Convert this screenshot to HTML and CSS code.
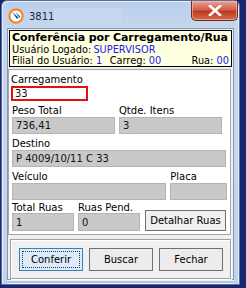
FILE: index.html
```html
<!DOCTYPE html>
<html lang="pt">
<head>
  <meta charset="UTF-8">
  <title>3811</title>
  <link rel="stylesheet" href="styles.css">
</head>
<body>
  <div class="window">
    <div class="titlebar">
      <svg class="app-icon" width="16" height="16" viewBox="0 0 16 16">
        <circle cx="8" cy="8" r="6.6" fill="#fff" stroke="#f08a24" stroke-width="2.2"/>
        <path d="M4 4 L9 11 L10.5 9.5 Z" fill="#1f3f9a"/>
        <path d="M7 3.5 L11.5 10 L12.5 8.5 Z" fill="#2a6ad0"/>
      </svg>
      <span class="title-text">3811</span>
      <span class="title-hidden"></span>
      <div class="close-btn">
        <svg width="14" height="11" viewBox="0 0 14 11">
          <path d="M2 1 L12 10 M12 1 L2 10" stroke="#fff" stroke-width="2.6" stroke-linecap="square"/>
        </svg>
      </div>
    </div>

    <div class="client">
      <div class="header">
        <div class="header-title">Conferência por Carregamento/Rua</div>
        <div class="header-line">
          <span>Usuário Logado:</span><span class="val">SUPERVISOR</span>
        </div>
        <div class="header-line">
          <span class="col-filial">Filial do Usuário: <span class="val">1</span></span>
          <span class="col-carreg">Carreg: <span class="val">00</span></span>
          <span>Rua: <span class="val">00</span></span>
        </div>
      </div>

      <div class="panel">
        <div class="row">
          <div class="field w-carreg">
            <label>Carregamento</label>
            <div class="input input-edit hl">33</div>
          </div>
        </div>
        <div class="row">
          <div class="field w-half">
            <label>Peso Total</label>
            <div class="input">736,41</div>
          </div>
          <div class="field w-half">
            <label>Qtde. Itens</label>
            <div class="input">3</div>
          </div>
        </div>
        <div class="row">
          <div class="field w-full">
            <label>Destino</label>
            <div class="input">P 4009/10/11 C 33</div>
          </div>
        </div>
        <div class="row">
          <div class="field w-veic">
            <label>Veículo</label>
            <div class="input"></div>
          </div>
          <div class="field w-placa">
            <label>Placa</label>
            <div class="input"></div>
          </div>
        </div>
        <div class="row row-last">
          <div class="field w-small">
            <label>Total Ruas</label>
            <div class="input tall">1</div>
          </div>
          <div class="field w-small">
            <label>Ruas Pend.</label>
            <div class="input tall">0</div>
          </div>
          <button class="btn btn-detalhar hl">Detalhar Ruas</button>
        </div>
      </div>

      <div class="actions">
        <button class="btn btn-main focused"><span>Conferir</span></button>
        <button class="btn btn-main">Buscar</button>
        <button class="btn btn-main">Fechar</button>
      </div>
    </div>
  </div>
</body>
</html>
```

FILE: styles.css
```css
* {
  padding: 0;
  margin: 0;
  box-sizing: border-box;
}

body {
  width: 246px;
  height: 288px;
  overflow: hidden;
  background-color: #17266e;
  font-family: "DejaVu Sans", Tahoma, sans-serif;
  font-size: 10px;
  color: #000;
}

.window {
  width: 239px;
  height: 285px;
  margin-left: 1px;
  border: 1px solid #5b6f96;
  border-radius: 6px 6px 0 0;
  background: linear-gradient(#b8cfec, #c6d8ef 30px, #c1d4ec);
  box-shadow: inset 1px 1px 0 #e4eefa, inset -1px 0 0 #e4eefa;
}

.titlebar {
  display: flex;
  align-items: flex-start;
  height: 27px;
  padding-left: 6px;
}

.app-icon {
  margin-top: 7px;
}

.title-text {
  margin: 10px 0 0 5px;
  font-size: 10px;
  line-height: 11px;
  color: #1e2a3c;
}

.title-hidden {
  width: 67px;
  height: 15px;
  margin-top: 7px;
  background-color: #c6d9f1;
}

.close-btn {
  display: flex;
  align-items: center;
  justify-content: center;
  width: 47px;
  height: 20px;
  margin-left: auto;
  margin-right: 1px;
  border: 1px solid #6e2a22;
  border-top: 0;
  border-radius: 0 0 5px 5px;
  background: linear-gradient(#e8a493, #d2614a 45%, #c0391f 55%, #d66a4e);
  box-shadow: inset 0 0 0 1px rgba(255, 210, 200, .5);
}

.client {
  display: flex;
  flex-direction: column;
  height: 252px;
  margin: 0 5px 0 5px;
  border: 1px solid #8497b8;
  background-color: #f0f0f0;
  box-shadow: 0 1px 0 #e8f0fb, 0 3px 0 #b2c6e0, 0 4px 0 #e8f0fb;
}

.header {
  height: 37px;
  margin: 1px 1px 0 1px;
  padding: 0 2px;
  border: 1px solid #000;
  background-color: #ffffe1;
  overflow: hidden;
}

.header-title {
  font-weight: bold;
  font-size: 11px;
  line-height: 14px;
  letter-spacing: -0.1px;
  white-space: nowrap;
}

.header-line {
  display: flex;
  gap: 2px;
  font-size: 9.8px;
  line-height: 10.5px;
  white-space: nowrap;
}

.col-filial {
  width: 97px;
}

.col-carreg {
  width: 81px;
}

.val {
  color: #1a1af0;
}

.panel {
  display: flex;
  flex-direction: column;
  gap: 4px;
  height: 167px;
  margin: 2px 2px 0 0;
  padding: 4px 3px 0 3px;
  border: 1px solid #a7a7a7;
  background-color: #fff;
}

.row {
  display: flex;
  gap: 4px;
  align-items: flex-end;
}

.row-last {
  margin-top: -1px;
}

.field {
  display: flex;
  flex-direction: column;
}

.field label {
  line-height: 12px;
}

.row-last .field label {
  line-height: 10px;
}

.input {
  height: 17px;
  padding: 1px 3px;
  border: 1px solid #b4b4b4;
  background-color: #c9c9c9;
  line-height: 14px;
  color: #111;
  overflow: hidden;
}

.input.tall {
  height: 18px;
  line-height: 15px;
}

.input-edit {
  height: 15px;
  padding: 0 2px;
  line-height: 12px;
  background-color: #fff;
}

.hl {
  border: 2px solid #e41010;
}

.w-carreg { width: 77px; margin-left: -1px; }
.w-half { width: 103px; }
.w-full { width: 214px; }
.w-veic { width: 155px; }
.w-placa { width: 57px; }
.w-small { width: 62px; }

.btn {
  font-family: inherit;
  font-size: 10px;
  color: #000;
  background-color: #ececec;
  border: 1px solid #707070;
}

.btn-detalhar {
  width: 81px;
  height: 21px;
  margin-left: 1px;
  background-color: #efefef;
}

.actions {
  display: flex;
  gap: 6px;
  height: 40px;
  margin: 4px 2px 0 2px;
  padding: 8px 0 0 8px;
  border: 1px solid #a0a0a0;
  box-shadow: inset 1px 1px 0 #fff, 1px 1px 0 #fff;
}

.btn-main {
  width: 64px;
  height: 23px;
}

.focused {
  padding: 2px;
  border-color: #3c7fb1;
  background-color: #dcecfc;
}

.focused span {
  display: block;
  height: 100%;
  line-height: 15px;
  border: 1px dotted #333;
}
```
